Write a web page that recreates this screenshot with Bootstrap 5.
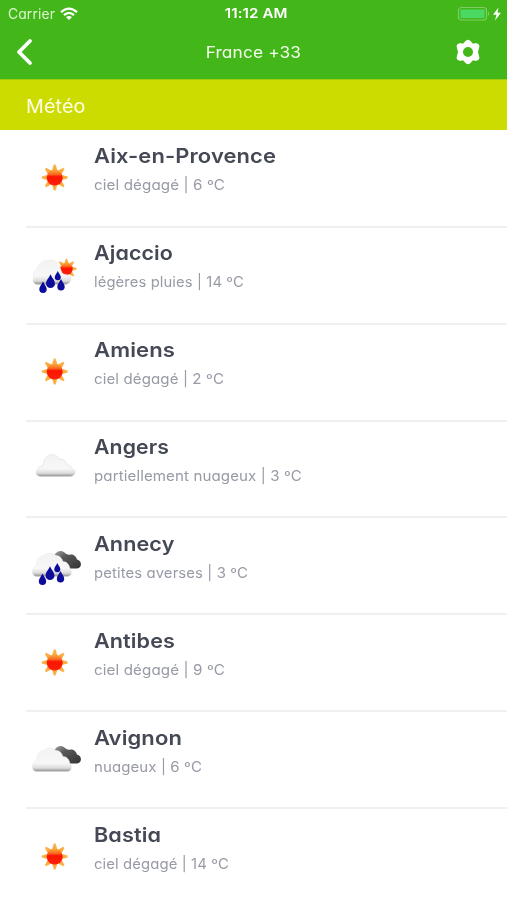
<!DOCTYPE html>
<html lang="fr">
<head>
<meta charset="utf-8">
<meta name="viewport" content="width=device-width, initial-scale=1">
<title>Météo</title>
<link href="https://cdn.jsdelivr.net/npm/bootstrap@5.3.0/dist/css/bootstrap.min.css" rel="stylesheet">
<style>
body{font-family:Inter,"Open Sans",sans-serif;font-feature-settings:"cv11";background:#fff;height:900px;overflow:hidden}
.topbar{background:#43b71a;height:79px;color:#fff}
.status{height:27px;font-size:14px;line-height:27px}
.status>*,.titlebar>*{flex:0 0 33.3333%}
.carrier{padding-left:8px;color:#dcf6cf}
.clock{font-weight:600;font-size:13.5px;padding-left:5px}
.power{padding-right:5px}
.titlebar{height:50px}
.title-text{font-size:16.5px;line-height:50px;color:#f2fdec}
.section-band{background:#cddc00;height:51px;border-top:1px solid #9fce0b;padding-left:25.5px;font-size:18.5px;line-height:53px;color:#fefee8}
.town{height:96.9px;margin-left:26px;border-bottom:2px solid #f0f0f1}
.town svg{width:60px;height:50px;margin-left:-1px;margin-top:24.5px;flex:none}
.town-info{padding-left:9px;padding-top:11.6px;white-space:nowrap}
.town-name{font-size:20.3px;font-weight:600;line-height:28px;color:#454855}
.town-sky{font-size:14.4px;line-height:20px;margin-top:5px;color:#989ba6}
.first-town{height:97.8px}
.first-town svg{margin-top:25px}
.first-town .town-info{padding-top:12.4px}
[data-w]{display:table;letter-spacing:.1px;transform-origin:0 50%}
.title-text,.clock{justify-content:center}
.title-text [data-w],.clock [data-w]{transform-origin:50% 50%}
</style>
<script src="https://cdn.jsdelivr.net/npm/bootstrap@5.3.0/dist/js/bootstrap.bundle.min.js"></script>
</head>
<body>
<svg width="0" height="0" class="position-absolute" aria-hidden="true">
<defs>
<linearGradient id="gRay" x2="0" y2="1"><stop stop-color="#f8b650"/><stop offset="1" stop-color="#faa638"/></linearGradient>
<linearGradient id="gCore" x2="0" y2="1"><stop stop-color="#f9b040"/><stop offset=".3" stop-color="#fb6a1c"/><stop offset=".45" stop-color="#fb1505"/><stop offset="1" stop-color="#fb2208"/></linearGradient>
<linearGradient id="gCloud" x2="0" y2="1"><stop stop-color="#f3f3f3"/><stop offset=".65" stop-color="#f7f7f7"/><stop offset=".85" stop-color="#dcdcdc"/><stop offset="1" stop-color="#8c8c8c"/></linearGradient>
<linearGradient id="gDark" x2="1" y2="1"><stop stop-color="#aaa"/><stop offset=".35" stop-color="#5a5a5a"/><stop offset="1" stop-color="#333"/></linearGradient>
<filter id="soft" x="-10%" y="-10%" width="120%" height="120%"><feGaussianBlur stdDeviation=".5"/></filter>
<path id="ray" d="M-2.500-7.400L-.9-13H.9L2.500-7.400Z"/>
<g id="sunshape"><g fill="url(#gRay)"><use href="#ray"/><use href="#ray" transform="rotate(45)"/><use href="#ray" transform="rotate(90)"/><use href="#ray" transform="rotate(135)"/><use href="#ray" transform="rotate(180)"/><use href="#ray" transform="rotate(225)"/><use href="#ray" transform="rotate(270)"/><use href="#ray" transform="rotate(315)"/></g><circle r="8" fill="url(#gCore)"/></g>
<path id="drop" d="M0-6C1.200-3 3.700-1 3.700 1.800A3.700 3.700 0 0 1-3.700 1.800C-3.700-1-1.200-3 0-6Z" fill="#0a0a9c"/>
<path id="whitecloud" d="M12 35.500C8.500 35.500 7 33 7.500 29.500C8 26.500 10 25.500 11.500 24C12 19 14 15 19 14.500C21 11.500 28 11.500 31 14.500C34 14 37 17 38 20.500C42 20.500 44.500 24 45 27.500C47.500 30 47 35.500 42 35.500Z" fill="url(#gCloud)" stroke="#e4e4e4" stroke-width=".4"/>
<path id="darkcloud" d="M28 17.500C29.500 11.500 35 7.500 40 12C42 13.500 43 14 45.500 13.500C49 13 51.500 16 52 18.500C57 19.500 57.500 27 52 27.500H43C39 27 38 23 36.500 20C34 16.500 31 16.500 28 17.500Z" fill="url(#gDark)"/>
<g id="drops"><use href="#drop" x="18" y="37.500"/><use href="#drop" transform="translate(25.500 31.500) scale(1.2)"/><use href="#drop" transform="translate(32.800 25.800) scale(.82)"/><use href="#drop" x="36" y="35"/></g>
<symbol id="clear" viewBox="0 0 60 50"><use href="#sunshape" x="29.700" y="22.500" filter="url(#soft)"/></symbol>
<symbol id="lightrain" viewBox="0 0 60 50"><g filter="url(#soft)"><use href="#sunshape" transform="translate(41.500 16.800) scale(.78)"/><path d="M14 32.500C9 33 7 29.500 8.500 26C8 22 9 19 12 17C13 11.500 18 8 23 8.500C28 7 32 9 33.500 13C36.500 17 36 20.500 38.500 22C42 23 44 23 45.500 24C47 27 46 31 41 32.500Z" fill="url(#gCloud)" stroke="#e4e4e4" stroke-width=".4"/><use href="#drops" y="-2"/></g></symbol>
<symbol id="partly" viewBox="0 0 60 50"><path filter="url(#soft)" d="M16 30.500C11 30.500 10 26 12.500 23.500C13 21 15.500 20 18 19.500C18.500 15 20 11 24 9.500C27 7.500 32 8.500 34 13C38 12.500 41 15 41.500 18.500C45 19 46.500 21 46.500 22.500C50.500 23 51.500 28 48 29.500L46 30.500Z" fill="url(#gCloud)" stroke="#d8d8d8" stroke-width=".5"/></symbol>
<symbol id="showers" viewBox="0 0 60 50"><g filter="url(#soft)"><use href="#darkcloud" y="-2"/><use href="#whitecloud" y="-2"/><use href="#drops" x="-.5" y="-1"/></g></symbol>
<symbol id="cloudy" viewBox="0 0 60 50"><g filter="url(#soft)"><use href="#darkcloud" y="-1"/><use href="#whitecloud" y="-1"/></g></symbol>
</defs>
</svg>

<header class="topbar">
  <div class="status d-flex">
    <div class="carrier d-flex align-items-center"><span data-w="47">Carrier</span>
      <svg class="ms-1" width="20" height="14" viewBox="0 0 20 14" fill="none" stroke="#fff" stroke-width="2.300"><path d="M2 5.200Q10-2 18 5.200M5 8.200Q10 3.500 15 8.200"/><path d="M10 13L7 10.200Q10 7.800 13 10.200Z" fill="#fff" stroke="none"/></svg>
    </div>
    <div class="clock d-flex"><span data-w="63">11:12 AM</span></div>
    <div class="power d-flex align-items-center justify-content-end">
      <svg width="45" height="16" viewBox="0 0 45 16"><rect x="1.500" y="1.500" width="28" height="12.500" rx="3" fill="none" stroke="#7fce63" stroke-width="1.200"/><rect x="3.500" y="3.500" width="24" height="8.500" rx="1" fill="#4bd964"/><path d="M31 5.500q2 2.200 0 4.500Z" fill="#8bd573"/><path d="M41.500 1.500L36 8.700H39.500L38 14.500L44 6.800H40.500Z" fill="#fff"/></svg>
    </div>
  </div>
  <div class="titlebar d-flex align-items-center">
    <div><svg class="ms-3 d-block" width="18" height="28" viewBox="0 0 18 28" fill="none" stroke="#fff" stroke-width="3.800" stroke-linecap="round" stroke-linejoin="round"><path d="M14 3L3 14L14 25"/></svg></div>
    <div class="title-text d-flex"><span data-w="95.500">France +33</span></div>
    <div class="d-flex justify-content-end pe-4"><svg width="30" height="28" viewBox="0 0 30 28"><g transform="translate(15 14)" fill="#fff"><path fill-rule="evenodd" d="M-3-10.500Q0-14 3-10.500L4.500-8.500L8.500-8.800Q12.500-7.500 11-4L10 0L11 4Q12.500 7.500 8.500 8.800L4.500 8.500L3 10.500Q0 14-3 10.500L-4.500 8.500L-8.500 8.800Q-12.500 7.500-11 4L-10 0L-11-4Q-12.500-7.500-8.500-8.800L-4.500-8.500ZM5 0A5 5 0 1 0-5 0A5 5 0 1 0 5 0Z"/></g></svg></div>
  </div>
</header>
<div class="section-band"><span data-w="59.500">Météo</span></div>
<main class="overflow-hidden">
  <div class="town d-flex first-town"><svg><use href="#clear"/></svg><div class="town-info"><div class="town-name" data-w="182">Aix-en-Provence</div><div class="town-sky" data-w="131">ciel dégagé | 6 ºC</div></div></div>
  <div class="town d-flex"><svg><use href="#lightrain"/></svg><div class="town-info"><div class="town-name" data-w="79">Ajaccio</div><div class="town-sky" data-w="150">légères pluies | 14 ºC</div></div></div>
  <div class="town d-flex"><svg><use href="#clear"/></svg><div class="town-info"><div class="town-name" data-w="81">Amiens</div><div class="town-sky" data-w="130">ciel dégagé | 2 ºC</div></div></div>
  <div class="town d-flex"><svg><use href="#partly"/></svg><div class="town-info"><div class="town-name" data-w="75">Angers</div><div class="town-sky" data-w="208">partiellement nuageux | 3 ºC</div></div></div>
  <div class="town d-flex"><svg><use href="#showers"/></svg><div class="town-info"><div class="town-name" data-w="80.500">Annecy</div><div class="town-sky" data-w="154">petites averses | 3 ºC</div></div></div>
  <div class="town d-flex"><svg><use href="#clear"/></svg><div class="town-info"><div class="town-name" data-w="81">Antibes</div><div class="town-sky" data-w="131">ciel dégagé | 9 ºC</div></div></div>
  <div class="town d-flex"><svg><use href="#cloudy"/></svg><div class="town-info"><div class="town-name" data-w="88">Avignon</div><div class="town-sky" data-w="108">nuageux | 6 ºC</div></div></div>
  <div class="town d-flex border-0"><svg><use href="#clear"/></svg><div class="town-info"><div class="town-name" data-w="67">Bastia</div><div class="town-sky" data-w="135">ciel dégagé | 14 ºC</div></div></div>
</main>
<script>
/* Widens each label so that it fills its set width. */
document.querySelectorAll('[data-w]').forEach(function(el){
  var w = el.getBoundingClientRect().width;
  el.style.transform = 'scaleX(' + (+el.dataset.w / w).toFixed(4) + ')';
});
</script>
</body>
</html>
